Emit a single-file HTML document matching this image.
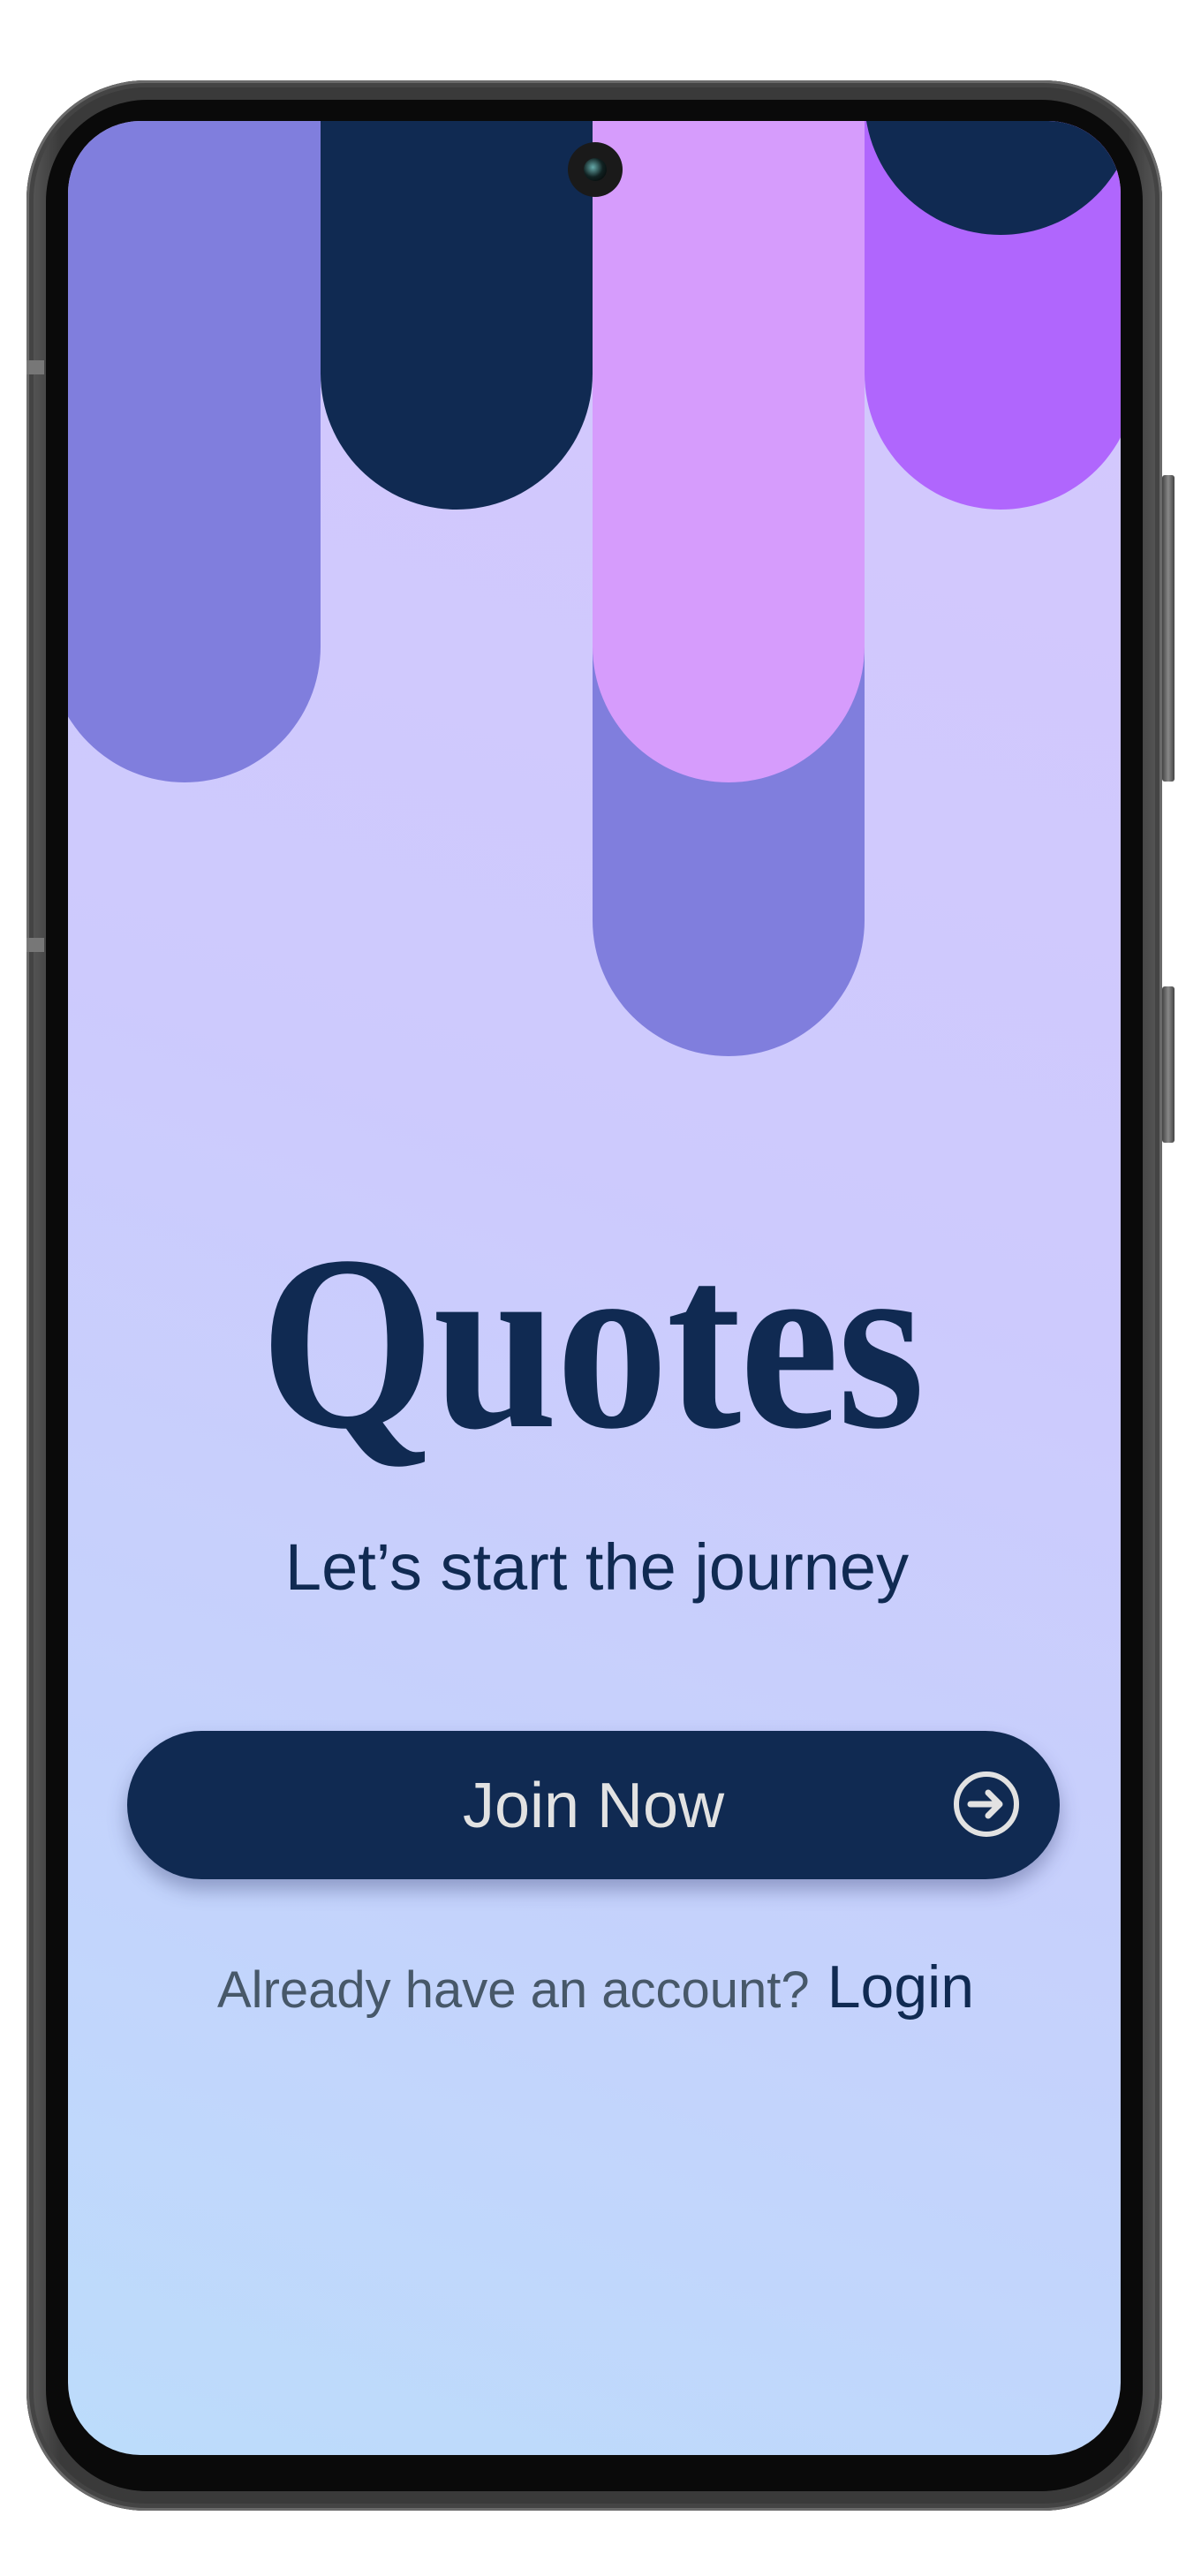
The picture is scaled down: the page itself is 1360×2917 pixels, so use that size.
<!DOCTYPE html>
<html><head><meta charset="utf-8"><style>
html,body{margin:0;padding:0;background:#fff;}
body{width:1360px;height:2917px;position:relative;overflow:hidden;font-family:"Liberation Sans",sans-serif;}
.phone{position:absolute;left:30px;top:91px;width:1286px;height:2752px;border-radius:135px;background:linear-gradient(90deg,#5a5a5a,#3a3a3a 3%,#3a3a3a 97%,#5a5a5a);box-shadow:inset 0 0 0 3px #6a6a6a, inset 0 0 0 8px #444;}
.bezel{position:absolute;left:52px;top:113px;width:1242px;height:2708px;border-radius:115px;background:#0a0a0a;}
.screen{position:absolute;left:77px;top:137px;width:1192px;height:2643px;border-radius:82px;overflow:hidden;background:linear-gradient(200deg,#d5c7fd 0%,#cdcafd 45%,#c4d3fc 75%,#bcdcfb 100%);}
.pill{position:absolute;width:308px;border-radius:0 0 154px 154px;}
.btn{position:absolute;left:144px;top:1960px;width:1056px;height:168px;border-radius:84px;background:#102a52;box-shadow:0 12px 22px rgba(40,50,100,0.35);}
.side{position:absolute;background:linear-gradient(90deg,#444,#888,#444);border-radius:3px;}
</style></head><body>
<div class="phone"></div>
<div class="side" style="left:1316px;top:538px;width:14px;height:347px;"></div>
<div class="side" style="left:1316px;top:1117px;width:14px;height:177px;"></div>
<div style="position:absolute;left:30px;top:408px;width:20px;height:16px;background:#777;"></div>
<div style="position:absolute;left:30px;top:1062px;width:20px;height:16px;background:#777;"></div>
<div class="bezel"></div>
<div class="screen">
  <div class="pill" style="left:-22px;top:-400px;height:1149px;background:#807edd;"></div>
  <div class="pill" style="left:286px;top:-400px;height:840px;background:#102a52;"></div>
  <div class="pill" style="left:594px;top:-400px;height:1459px;background:#807edd;"></div>
  <div class="pill" style="left:594px;top:-400px;height:1149px;background:#d69cfc;"></div>
  <div class="pill" style="left:902px;top:-400px;height:840px;background:#b066fd;"></div>
  <div style="position:absolute;left:902px;top:-179px;width:308px;height:308px;border-radius:50%;background:#102a52;"></div>
</div>
<div style="position:absolute;left:643px;top:161px;width:62px;height:62px;border-radius:50%;background:#1a1a1a;"></div>
<div style="position:absolute;left:661px;top:179px;width:26px;height:26px;border-radius:50%;background:radial-gradient(circle at 40% 40%,#6aa,#122 50%,#000);"></div>

<div style="position:absolute;left:0;width:1340px;top:1370px;text-align:center;">
  <span style="display:inline-block;font-family:'Liberation Serif',serif;font-weight:bold;font-size:282px;line-height:300px;color:#102a52;transform:scaleX(0.9);transform-origin:center;letter-spacing:-2px;">Quotes</span>
</div>
<div style="position:absolute;left:0;width:1352px;top:1730px;text-align:center;font-size:74px;line-height:90px;color:#102a52;">Let’s start the journey</div>

<div class="btn"></div>
<div style="position:absolute;left:144px;width:1056px;top:2000px;text-align:center;font-size:72px;line-height:90px;color:#e2e2e2;">Join Now</div>
<svg style="position:absolute;left:1077px;top:2003px;" width="80" height="80" viewBox="0 0 80 80">
  <circle cx="40" cy="40" r="34" fill="none" stroke="#e2e2e2" stroke-width="6"/>
  <path d="M22 40 H54 M42 27 L55 40 L42 53" fill="none" stroke="#e2e2e2" stroke-width="7" stroke-linecap="round" stroke-linejoin="round"/>
</svg>

<div style="position:absolute;left:246px;top:2210px;white-space:nowrap;line-height:80px;">
  <span style="font-size:58px;color:#475869;">Already have an account?</span><span style="font-size:68px;color:#102a52;margin-left:20px;">Login</span>
</div>
</body></html>
